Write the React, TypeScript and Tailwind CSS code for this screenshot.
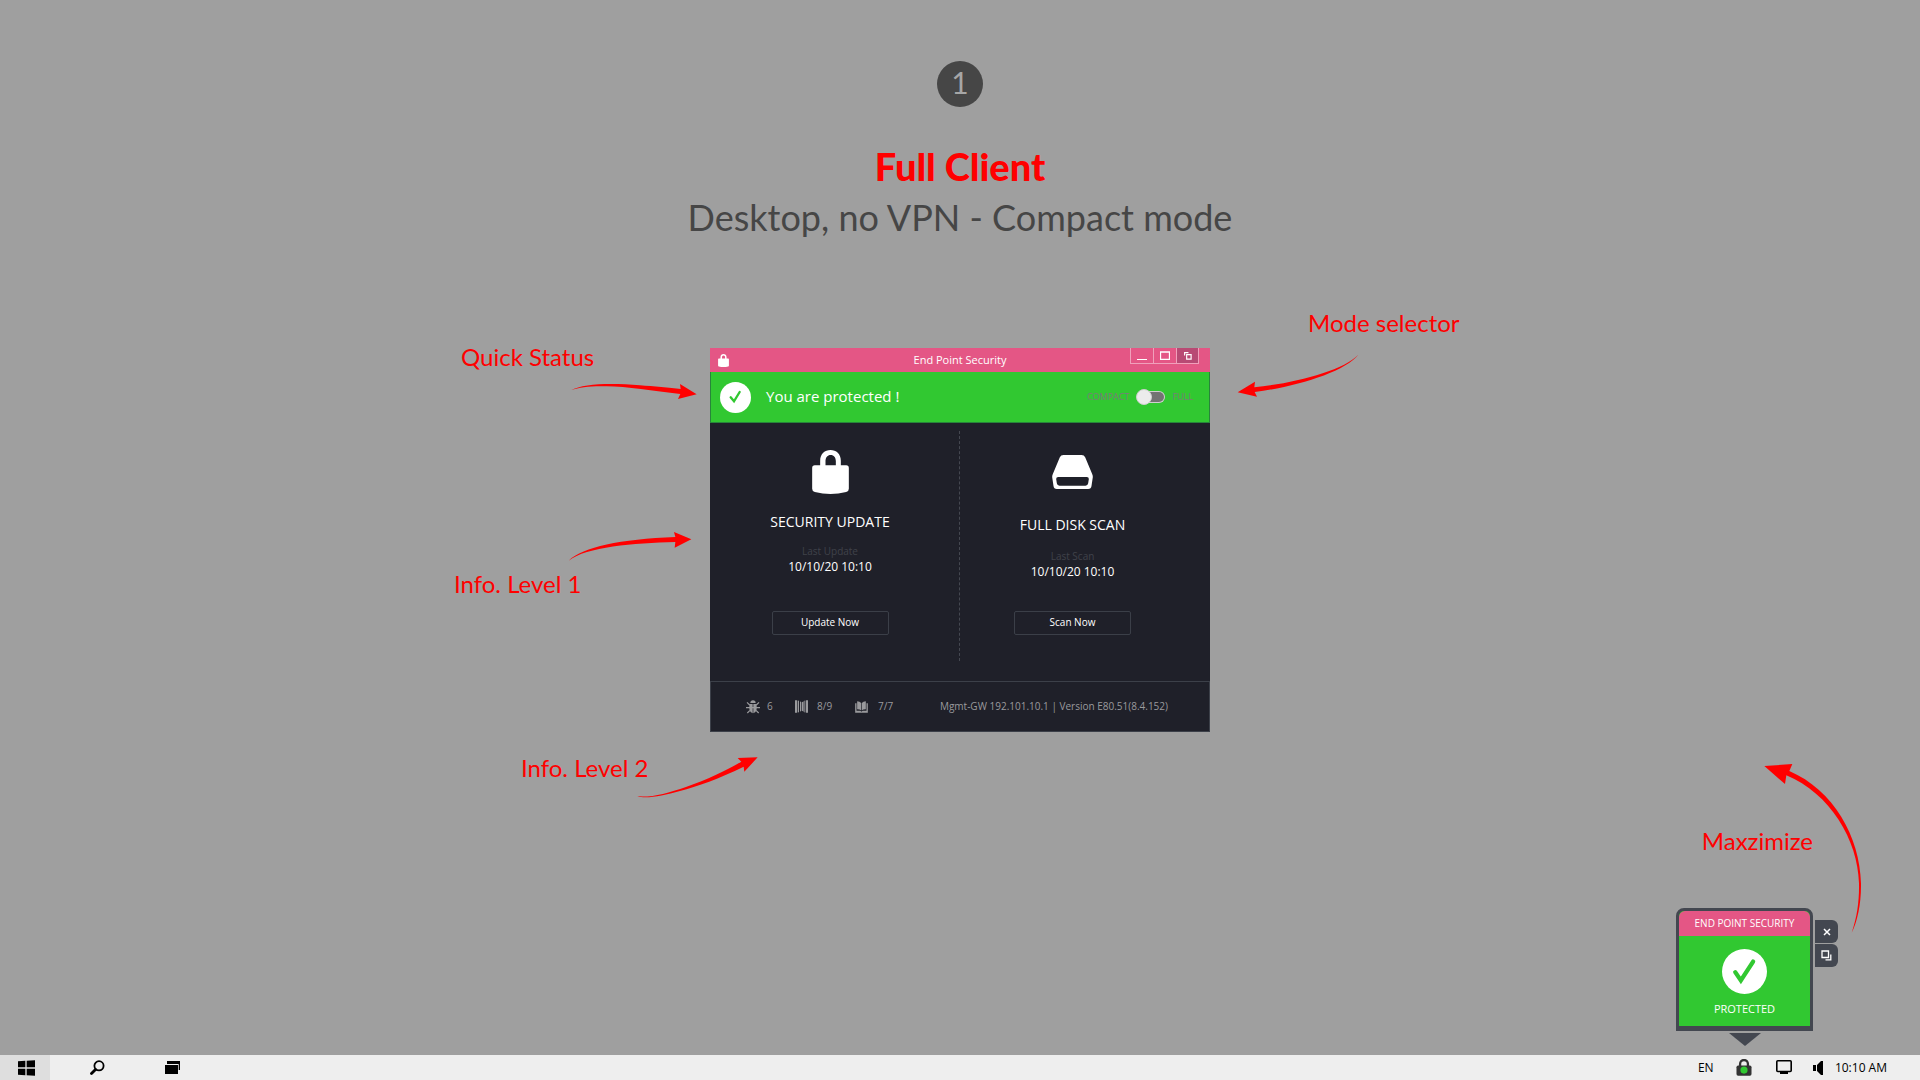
import React from "react";

function Arrow({ viewBox, d, className }: { viewBox: string; d: string; className: string }) {
  return (
    <svg viewBox={viewBox} className={`absolute fill-[#ff0000] ${className}`} aria-hidden="true">
      <path d={d} />
    </svg>
  );
}

function Note({ children, className }: { children: React.ReactNode; className: string }) {
  return (
    <p className={`absolute font-['Lato',sans-serif] text-2xl leading-8 whitespace-nowrap text-[#ff0000] ${className}`}>
      {children}
    </p>
  );
}

function LockIcon({ className }: { className: string }) {
  return (
    <svg viewBox="0 0 110 132" className={className} fill="currentColor" aria-hidden="true">
      <path
        fillRule="evenodd"
        d="M24 46V32C24 12 38 0 55 0s31 12 31 32v14h16q8 0 8 8v62q0 8-8 10-47 12-94 0-8-2-8-10V54q0-8 8-8zM40 46h31V34c0-12-6-19-15.500-19S40 22 40 34z"
      />
    </svg>
  );
}

function CheckIcon({ className }: { className: string }) {
  return (
    <svg viewBox="0 0 136 136" className={className} aria-hidden="true">
      <circle cx="68" cy="68" r="68" fill="#fff" />
      <path d="M40 70 57 95 94 38" fill="none" stroke="#31c831" strokeWidth="13" strokeLinecap="round" strokeLinejoin="miter" />
    </svg>
  );
}

function SmallCheckIcon({ className }: { className: string }) {
  return (
    <svg viewBox="0 0 93 93" className={className} aria-hidden="true">
      <circle cx="46.500" cy="46.500" r="46.500" fill="#fff" />
      <path d="M32 46 42 58 59 30" fill="none" stroke="#31c831" strokeWidth="7" strokeLinecap="round" />
    </svg>
  );
}

function DiskIcon({ className }: { className: string }) {
  return (
    <svg viewBox="0 0 122 102" className={className} fill="currentColor" aria-hidden="true">
      <path
        fillRule="evenodd"
        d="M34 0h54q8 0 11 7l21 50q2 4 2 9l-4 27q-1 9-10 9H14q-9 0-10-9L0 66q0-5 2-9L23 7q3-7 11-7zM18 66q-6 0-6 6l2 13q1 7 8 7h78q7 0 8-7l2-13q0-6-6-6z"
      />
    </svg>
  );
}

function BugIcon() {
  return (
    <svg viewBox="0 0 42 42" className="size-[14px]" aria-hidden="true">
      <path d="M13 9a8 8 0 0 1 16 0z" fill="#9a9a9d" />
      <path d="M10 12h10v28q-8-2-10-12zM22 12h10v16q-2 10-10 12z" fill="#9a9a9d" />
      <path d="M3 7l8 8M39 7l-8 8M0 23h42M4 39l8-8M38 39l-8-8" stroke="#9a9a9d" strokeWidth="3.500" />
    </svg>
  );
}

function BinderIcon() {
  return (
    <svg viewBox="0 0 39 38" className="h-[13px] w-[13px]" fill="#9a9a9d" aria-hidden="true">
      <path d="M0 0h6v38H0zM8 1l4 1v34l-4 1zM15 3l4 3v26l-4 3zM21 6l5-3v32l-5-3zM28 2l3-1v36l-3-1zM33 0h6v38h-6z" />
    </svg>
  );
}

function BookIcon() {
  return (
    <svg viewBox="0 0 38 36" className="h-[12px] w-[13px]" aria-hidden="true">
      <path d="M0 7h4v22h12l3 3 3-3h12V7h4v28H0z" fill="#9a9a9d" />
      <path d="M6 1q8 0 12 5v22q-4-3-12-3zM32 1q-8 0-12 5v22q4-3 12-3z" fill="#9a9a9d" />
    </svg>
  );
}

function TitleBar() {
  return (
    <header className="relative flex h-6 items-center justify-center bg-[#e45685] text-white">
      <LockIcon className="absolute left-2 h-[13px] w-[11px]" />
      <h2 className="text-[11px]">End Point Security</h2>
      <div className="absolute top-0 right-[11px] flex h-4 divide-x divide-[#f0a0bb] border-x border-b border-[#f0a0bb]">
        <button type="button" aria-label="Minimize" className="flex w-[23px] items-center justify-center">
          <svg viewBox="0 0 10 10" className="size-[10px]">
            <path d="M0 8.500h10" stroke="#fff" />
          </svg>
        </button>
        <button type="button" aria-label="Maximize" className="flex w-[23px] items-center justify-center">
          <svg viewBox="0 0 10 9" className="h-[9px] w-[10px]">
            <path d="M.5 1h9v7.500h-9zM0 1h10" fill="none" stroke="#fff" strokeWidth="1.300" />
          </svg>
        </button>
        <button type="button" aria-label="Dock to tray" className="flex w-[21px] items-center justify-center bg-[#b84a74]">
          <svg viewBox="0 0 9 9" className="size-2">
            <path d="M3 3h5v5H3zM.7 4V.7H5" fill="none" stroke="#fff" strokeWidth="1.300" />
          </svg>
        </button>
      </div>
    </header>
  );
}

function ModeSwitch() {
  return (
    <label className="flex items-center gap-[7px] text-[9px] text-[#7a7b7a]">
      <span>COMPACT</span>
      <input type="checkbox" role="switch" aria-label="Full mode" className="sr-only" />
      <span className="flex h-4 w-[29px] items-center">
        <span className="z-10 size-4 shrink-0 rounded-full border border-[#cfcfcf] bg-[#ececec]" />
        <span className="-ml-1 h-3 grow rounded-r-full border border-l-0 border-[#cfcfcf] bg-[#737373]" />
      </span>
      <span>FULL</span>
    </label>
  );
}

function ActionButton({ children }: { children: React.ReactNode }) {
  return (
    <button type="button" className="h-6 w-[117px] rounded-xs border border-[#3b3f48] pb-px text-[10px] text-white">
      {children}
    </button>
  );
}

function ClientWindow() {
  return (
    <section className="w-[500px] bg-[#1f2029] text-white" aria-label="End Point Security">
      <TitleBar />
      <div className="flex h-[51px] items-center border-x border-b border-[#27853a] bg-[#31c831] pr-4 pl-[9px]">
        <SmallCheckIcon className="size-[31px]" />
        <p className="ml-[15px] grow pb-px text-[15px]">You are protected !</p>
        <ModeSwitch />
      </div>
      <div className="flex h-[258px] pt-2 pb-5">
        <div className="flex w-1/2 flex-col items-center border-r border-dashed border-[#454851] pt-[19px] pr-[9px]">
          <LockIcon className="h-11 w-[37px]" />
          <h3 className="mt-[18px] text-sm leading-5">SECURITY UPDATE</h3>
          <p className="mt-[11px] text-[10px] leading-4 text-[#3f424a]">Last Update</p>
          <p className="mb-[36px] text-xs leading-4">10/10/20 10:10</p>
          <ActionButton>Update Now</ActionButton>
        </div>
        <div className="flex w-1/2 flex-col items-center pt-[24px] pr-[25px]">
          <DiskIcon className="h-[34px] w-[41px]" />
          <h3 className="mt-[26px] text-sm leading-5">FULL DISK SCAN</h3>
          <p className="mt-[13px] text-[10px] leading-4 text-[#3f424a]">Last Scan</p>
          <p className="mb-[31px] text-xs leading-4">10/10/20 10:10</p>
          <ActionButton>Scan Now</ActionButton>
        </div>
      </div>
      <footer className="flex h-[51px] items-center border border-[#3c4049] pr-[41px] pl-[35px] text-[10px] text-[#9a9a9d]">
        <span className="flex w-[49px] items-center gap-[7px]">
          <BugIcon />6
        </span>
        <span className="flex w-[60px] items-center gap-[9px]">
          <BinderIcon />
          8/9
        </span>
        <span className="flex items-center gap-[10px]">
          <BookIcon />
          7/7
        </span>
        <span className="ml-auto">Mgmt-GW 192.101.10.1 | Version E80.51(8.4.152)</span>
      </footer>
    </section>
  );
}

function TrayWidget() {
  return (
    <aside className="absolute right-[82px] bottom-[9px] flex items-start gap-0.5 text-white">
      <div className="flex flex-col items-center">
        <div className="flex h-[123px] w-[137px] flex-col overflow-hidden rounded-t-lg border-x-[3px] border-t-[3px] border-b-[5px] border-[#434750] bg-[#31c831]">
          <h2 className="flex h-[25px] items-center justify-center rounded-t-md bg-[#e45685] text-[10px]">END POINT SECURITY</h2>
          <div className="flex grow flex-col items-center pt-[13px]">
            <CheckIcon className="size-[45px]" />
            <p className="mt-[7px] text-[11px] leading-4">PROTECTED</p>
          </div>
        </div>
        <svg viewBox="0 0 32 13" className="mt-0.5 h-[13px] w-8" aria-hidden="true">
          <path d="M0 0h32L16 13z" fill="#434750" />
        </svg>
      </div>
      <div className="flex flex-col gap-px pt-3">
        <button type="button" aria-label="Close" className="flex size-[23px] items-center justify-center rounded-r-md bg-[#434750]">
          <svg viewBox="0 0 8 8" className="size-2">
            <path d="M1 1l6 6M7 1L1 7" stroke="#fff" strokeWidth="1.500" />
          </svg>
        </button>
        <button type="button" aria-label="Maximize" className="flex size-[23px] items-center justify-center rounded-r-md bg-[#434750]">
          <svg viewBox="0 0 11 11" className="size-[11px]">
            <path d="M1 1h6.500v6.500H1zM9.800 4.500v5.300H4.500" fill="none" stroke="#fff" strokeWidth="1.300" />
          </svg>
        </button>
      </div>
    </aside>
  );
}

function Taskbar() {
  return (
    <nav className="flex h-[25px] items-center bg-[#eeeeee] pr-[33px] text-xs text-black">
      <button type="button" aria-label="Start" className="flex h-full w-[50px] items-center justify-center bg-[#dedede]">
        <svg viewBox="0 0 51 46" className="ml-0.5 h-[16px] w-[17px]">
          <path d="M0 3l22-2v20H0zM26 1l25-1v21H26zM0 25h22v20L0 43zM26 25h25v21l-25-1z" />
        </svg>
      </button>
      <button type="button" aria-label="Search" className="ml-10 flex w-[15px] justify-center">
        <svg viewBox="0 0 15 15" className="size-[15px]" fill="none" stroke="#000">
          <circle cx="9" cy="5.800" r="4.600" strokeWidth="1.800" />
          <path d="M5.500 9.500L1.500 13.500" strokeWidth="2.800" strokeLinecap="round" />
        </svg>
      </button>
      <button type="button" aria-label="Task view" className="ml-[60px]">
        <svg viewBox="0 0 15 13" className="h-[13px] w-[15px]">
          <path d="M2 0h13v9h-1.300V3H2zM0 4h13v9H0z" />
        </svg>
      </button>
      <span className="ml-auto w-[38px]">EN</span>
      <svg viewBox="0 0 48 52" className="h-[17px] w-4" aria-label="Endpoint protected">
        <path d="M12 24V15a12 12 0 0 1 24 0v9" fill="none" stroke="#333" strokeWidth="7" />
        <rect x="1" y="20" width="46" height="31" rx="5" fill="#333" />
        <circle cx="24" cy="34" r="11" fill="#31c831" />
      </svg>
      <svg viewBox="0 0 16 15" className="ml-6 h-[15px] w-4" aria-label="Display">
        <rect x=".8" y=".8" width="14.400" height="10.700" rx="1" fill="none" stroke="#000" strokeWidth="1.600" />
        <path d="M4 12h8v2H4z" />
      </svg>
      <svg viewBox="0 0 10 14" className="ml-[21px] h-[14px] w-[10px]" aria-label="Volume">
        <path d="M0 4h3v6H0zM4 4l4-4h2v14H8L4 10z" />
      </svg>
      <time className="ml-3">10:10 AM</time>
    </nav>
  );
}

export default function App() {
  return (
    <div className="flex min-h-screen flex-col bg-[#9f9f9f] font-['Open_Sans','Noto_Sans',sans-serif]">
      <header className="flex flex-col items-center pt-[61px] font-['Lato',sans-serif]">
        <span className="flex size-[46px] items-center justify-center rounded-full bg-[#464646] pb-1 text-3xl text-[#a6a6a6]">1</span>
        <h1 className="mt-[34px] text-[38px] leading-[50px] font-black text-[#ff0000]">Full Client</h1>
        <p className="text-4xl leading-[52px] text-[#464646]">Desktop, no VPN - Compact mode</p>
      </header>
      <main className="relative flex grow flex-col items-center pt-[105px]">
        <div className="relative">
          <ClientWindow />
          <Note className="top-[-7px] left-[-249px]">Quick Status</Note>
          <Arrow
            className="top-[35px] left-[-140px] h-[17px] w-32"
            viewBox="390 160 384 51"
            d="M393 182C430 160 520 160 600 167C640 170 690 175 722 178L720 163L770 194L714 208L721 193C640 184 560 170 500 170C450 169 420 172 393 182z"
          />
          <Note className="top-[220px] left-[-256px]">Info. Level 1</Note>
          <Arrow
            className="top-[183px] left-[-142px] h-[31px] w-[125px]"
            viewBox="384 603 375 93"
            d="M386 692C430 650 540 628 706 621L702 606L754 628L704 653L706 636C580 640 440 650 386 692z"
          />
          <Note className="top-[404px] left-[-189px]">Info. Level 2</Note>
          <Arrow
            className="top-[408px] left-[-73px] h-[42px] w-[121px]"
            viewBox="411 78 363 126"
            d="M412 199C460 202 500 190 560 170C620 150 680 120 724 95L713 84L773 82L733 125L731 110C660 145 590 170 540 183C490 197 440 207 412 199z"
          />
          <Note className="top-[-41px] left-[598px]">Mode selector</Note>
          <Arrow
            className="top-[5px] left-[527px] h-[45px] w-[122px]"
            viewBox="51 189 366 135"
            d="M415 194C370 242 220 280 103 292L105 275L53 307L111 320L104 306C230 290 375 245 415 194z"
          />
        </div>
        <Note className="right-[107px] bottom-[198px]">Maxzimize</Note>
        <Arrow
          className="right-[58px] bottom-[120px] h-[172px] w-[98px]"
          viewBox="312 69 294 516"
          d="M313 78L397 72L388 93C520 150 600 290 603 430C604 490 592 545 575 578C592 530 598 480 597 430C594 300 510 160 379 106L375 132z"
        />
        <TrayWidget />
      </main>
      <Taskbar />
    </div>
  );
}
